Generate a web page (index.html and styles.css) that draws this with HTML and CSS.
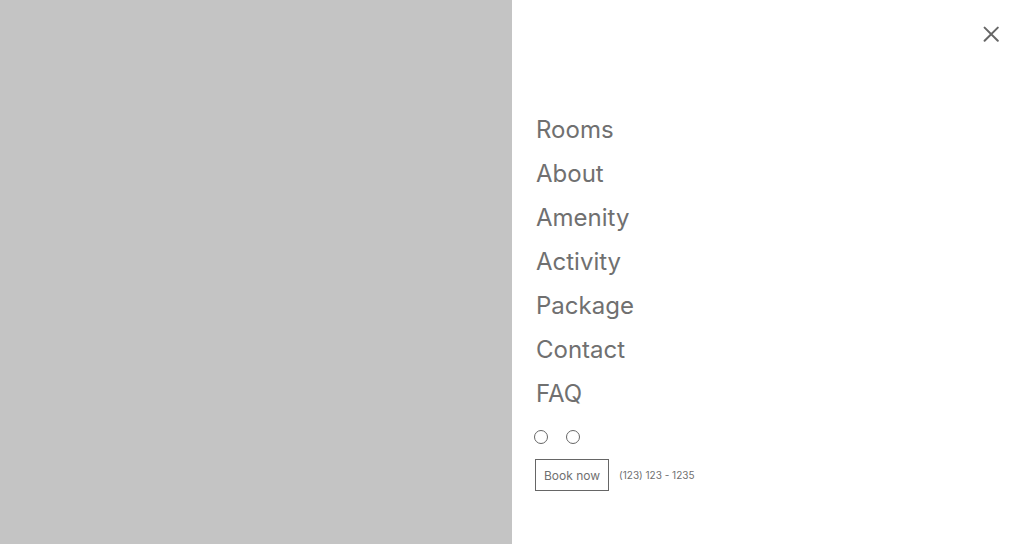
FILE: index.html
```html
<!DOCTYPE html>
<html lang="en">
<head>
<meta charset="utf-8">
<meta name="viewport" content="width=device-width, initial-scale=1">
<title>Menu</title>
<link rel="stylesheet" href="styles.css">
</head>
<body>
<div class="layout">
  <div class="cover"></div>
  <aside class="menu">
    <header class="menu-head">
      <button class="close" type="button" aria-label="Close menu">
        <svg width="16" height="16" viewBox="0 0 16 16" fill="none" stroke="currentColor" stroke-width="2" stroke-linecap="round" aria-hidden="true"><path d="M1.6 1.6 14.8 14.8M14.8 1.6 1.6 14.8"/></svg>
      </button>
    </header>
    <nav class="links">
      <a href="#rooms">Rooms</a>
      <a href="#about">About</a>
      <a href="#amenity">Amenity</a>
      <a href="#activity">Activity</a>
      <a href="#package">Package</a>
      <a href="#contact">Contact</a>
      <a href="#faq">FAQ</a>
    </nav>
    <div class="social">
      <a href="#social-one" aria-label="Social profile one"></a>
      <a href="#social-two" aria-label="Social profile two"></a>
    </div>
    <div class="booking">
      <button class="book" type="button">Book now</button>
      <a class="phone" href="tel:1231231235">(123) 123 - 1235</a>
    </div>
  </aside>
</div>
</body>
</html>
```
FILE: styles.css
```css
* {
  box-sizing: border-box;
}

body {
  margin: 0;
  font-family: Inter, "Liberation Sans", sans-serif;
  color: #707070;
  background: #fff;
}

a {
  color: inherit;
  text-decoration: none;
}

.layout {
  display: grid;
  grid-template-columns: 1fr 1fr;
  min-height: 100vh;
}

.cover {
  background: #c4c4c4;
}

.menu {
  display: flex;
  flex-direction: column;
  padding: 22px 21px 52px 23px;
}

.menu-head {
  display: flex;
  justify-content: flex-end;
  margin-bottom: 68px;
}

.close {
  display: flex;
  padding: 4px;
  border: 0;
  background: none;
  color: #666;
}

.links {
  display: flex;
  flex-direction: column;
  align-items: flex-start;
  gap: 12px;
  padding-left: 1px;
  font-size: 24px;
  line-height: 32px;
}

.social {
  display: flex;
  gap: 18px;
  margin: 20px 0 15px -1px;
}

.social a {
  width: 14px;
  height: 14px;
  border: 1px solid #666;
  border-radius: 50%;
}

.booking {
  display: flex;
  align-items: center;
  gap: 10px;
}

.book {
  height: 32px;
  padding: 0 8px;
  border: 1px solid #666;
  background: #fff;
  color: inherit;
  font: inherit;
  font-size: 12px;
}

.phone {
  font-size: 10px;
  line-height: 16px;
}
```
